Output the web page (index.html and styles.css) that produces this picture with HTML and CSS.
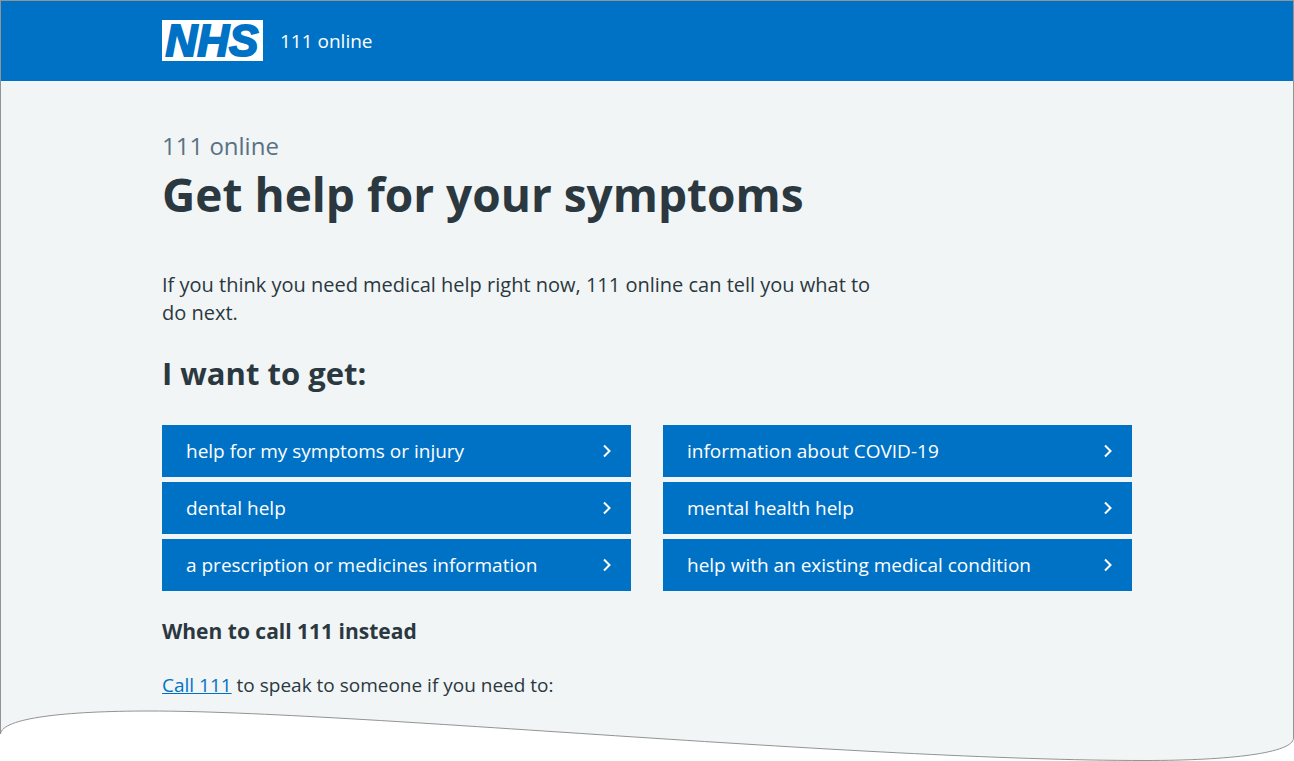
FILE: index.html
```html
<!DOCTYPE html>
<html lang="en">
<head>
<meta charset="UTF-8">
<meta name="viewport" content="width=device-width, initial-scale=1">
<title>Get help for your symptoms - 111 online</title>
<link rel="stylesheet" href="styles.css">
</head>
<body>
	<div class="page">
		<header class="header">
			<div class="container header-inner">
				<svg class="logo" viewBox="0 0 101 41" role="img" aria-label="NHS">
					<rect width="101" height="41" fill="#fff"/>
					<text class="logo-text" x="50" y="36" text-anchor="middle">NHS</text>
				</svg>
				<span class="service">111 online</span>
			</div>
		</header>
		<main class="container main">
			<h1 class="title">
				<span class="caption">111 online</span>
				Get help for your symptoms
			</h1>
			<p class="intro">If you think you need medical help right now, 111 online can tell you what to do next.</p>
			<h2 class="subtitle">I want to get:</h2>
			<ul class="links">
				<li><a href="#">help for my symptoms or injury <svg class="arrow" viewBox="0 0 8 14"><path d="M1 1.5L6.5 7L1 12.5"/></svg></a></li>
				<li><a href="#">information about COVID-19 <svg class="arrow" viewBox="0 0 8 14"><path d="M1 1.5L6.5 7L1 12.5"/></svg></a></li>
				<li><a href="#">dental help <svg class="arrow" viewBox="0 0 8 14"><path d="M1 1.5L6.5 7L1 12.5"/></svg></a></li>
				<li><a href="#">mental health help <svg class="arrow" viewBox="0 0 8 14"><path d="M1 1.5L6.5 7L1 12.5"/></svg></a></li>
				<li><a href="#">a prescription or medicines information <svg class="arrow" viewBox="0 0 8 14"><path d="M1 1.5L6.5 7L1 12.5"/></svg></a></li>
				<li><a href="#">help with an existing medical condition <svg class="arrow" viewBox="0 0 8 14"><path d="M1 1.5L6.5 7L1 12.5"/></svg></a></li>
			</ul>
			<h3 class="call-title">When to call 111 instead</h3>
			<p class="call"><a href="#">Call 111</a> to speak to someone if you need to:</p>
		</main>
	</div>
	<!-- wavy bottom edge -->
	<svg class="wave" viewBox="0 0 1294 61" preserveAspectRatio="none" aria-hidden="true">
		<path d="M.5 -2V34C2 18 65 11 150 11C350 11 860 60.5 1145 60.5C1230 60.5 1293.5 53 1293.5 38V-2"/>
	</svg>
</body>
</html>
```
FILE: styles.css
```css
* {
	box-sizing: border-box;
}
body {
	margin: 0;
	background-color: #fff;
	color: #2b3840;
	font-family: "Open Sans", "Noto Sans", sans-serif;
	font-size: 19px;
	line-height: 28px;
}
h1, h2, h3, p, ul {
	margin: 0;
	padding: 0;
}
.page {
	border: 1px solid #919495;
	border-bottom: none;
	background-color: #f1f5f6;
}
.container {
	max-width: 970px;
	margin: 0 auto;
}
.header {
	background-color: #0072c6;
	color: #fff;
}
.header-inner {
	display: flex;
	align-items: center;
	gap: 17px;
	padding: 19px 0 20px;
}
.logo {
	width: 101px;
	height: 41px;
	overflow: visible;
}
.logo-text {
	fill: #0072c6;
	stroke: #0072c6;
	stroke-width: 2;
	font-family: "Liberation Sans", sans-serif;
	font-size: 44px;
	font-weight: bold;
	font-style: italic;
}
.main {
	padding: 48px 0 1px;
}
.title {
	font-size: 46px;
	font-weight: bold;
	line-height: 62px;
	margin-bottom: 46px;
}
.caption {
	display: block;
	color: #5a7184;
	font-size: 24px;
	font-weight: normal;
	line-height: 34px;
}
.intro {
	max-width: 710px;
	margin-bottom: 24px;
	font-size: 20px;
}
.subtitle {
	font-size: 31px;
	line-height: 44px;
	margin-bottom: 30px;
}
.links {
	display: grid;
	grid-template-columns: 1fr 1fr;
	gap: 5px 32px;
	margin-bottom: 24px;
	list-style: none;
}
.links a {
	display: flex;
	align-items: center;
	justify-content: space-between;
	padding: 12px 20px 12px 24px;
	background-color: #0072c6;
	color: #fff;
	text-decoration: none;
}
.arrow {
	width: 8px;
	height: 14px;
	fill: none;
	stroke: #fff;
	stroke-width: 2;
}
.call-title {
	font-size: 21px;
	line-height: 32px;
	margin-bottom: 24px;
}
.call a {
	color: #0072c6;
}
.wave {
	display: block;
	width: 100%;
	height: 61px;
}
.wave path {
	fill: #f1f5f6;
	stroke: #919495;
}
```
